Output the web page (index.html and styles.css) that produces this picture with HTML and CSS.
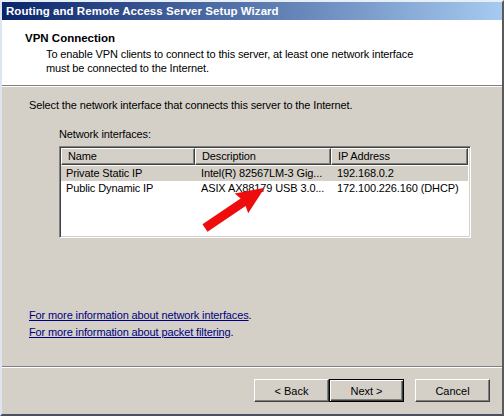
FILE: index.html
```html
<!DOCTYPE html>
<html>
<head>
<meta charset="utf-8">
<link rel="stylesheet" href="styles.css">
</head>
<body>
<div class="window">
  <div class="titlebar">Routing and Remote Access Server Setup Wizard</div>
  <div class="header">
    <div class="h-title">VPN Connection</div>
    <div class="h-sub">To enable VPN clients to connect to this server, at least one network interface<br>must be connected to the Internet.</div>
  </div>
  <div class="body">
    <div class="intro">Select the network interface that connects this server to the Internet.</div>
    <div class="group">
      <div class="label">Network interfaces:</div>
      <div class="listbox">
        <div class="lv-head">
          <div class="col c1">Name</div>
          <div class="col c2">Description</div>
          <div class="col c3">IP Address</div>
        </div>
        <div class="row sel">
          <div class="cell c1">Private Static IP</div>
          <div class="cell c2">Intel(R) 82567LM-3 Gig...</div>
          <div class="cell c3">192.168.0.2</div>
        </div>
        <div class="row">
          <div class="cell c1">Public Dynamic IP</div>
          <div class="cell c2">ASIX AX88179 USB 3.0...</div>
          <div class="cell c3">172.100.226.160 (DHCP)</div>
        </div>
        <svg class="arrow" viewBox="0 0 412 92" width="412" height="92">
          <g transform="translate(146 82) rotate(-34)">
            <polygon points="0,-4.5 46,-4.5 44,-12 72,0 44,12 46,4.5 0,4.5" fill="#ee0c0c"/>
          </g>
        </svg>
      </div>
    </div>
    <div class="links">
      <div><a href="#">For more information about network interfaces</a>.</div>
      <div><a href="#">For more information about packet filtering</a>.</div>
    </div>
  </div>
  <div class="footer">
    <button class="btn">&lt; Back</button>
    <button class="btn default">Next &gt;</button>
    <button class="btn cancel">Cancel</button>
  </div>
</div>
</body>
</html>
```
FILE: styles.css
```css
html, body {
  margin: 0;
  padding: 0;
  width: 504px;
  height: 416px;
  overflow: hidden;
  background: #d4d0c8;
}
.window {
  box-sizing: border-box;
  width: 504px;
  height: 416px;
  display: flex;
  flex-direction: column;
  background: #d4d0c8;
  border-left: 2px solid #dde6f0;
  border-top: 2px solid #e8eef6;
  border-right: 2px solid #5a5a5a;
  border-bottom: 2px solid #4a5060;
  font-family: "Liberation Sans", Arial, sans-serif;
  font-size: 11px;
  letter-spacing: -0.12px;
  color: #000;
}
.titlebar {
  height: 18px;
  line-height: 18px;
  padding-left: 4px;
  color: #fff;
  font-weight: bold;
  font-size: 11.5px;
  letter-spacing: 0.05px;
  background: linear-gradient(to right, #0a246a, #a6caf0);
}
.header {
  background: #fff;
  height: 66px;
  box-sizing: border-box;
  padding: 11px 0 0 23px;
  border-bottom: 1px solid #808080;
  box-shadow: 0 1px 0 #fff;
}
.h-title {
  font-weight: bold;
  font-size: 11.5px;
  line-height: 14px;
  letter-spacing: 0;
}
.h-sub {
  padding-left: 21px;
  margin-top: 2px;
  line-height: 14px;
}
.body {
  flex: 1;
  padding: 12px 0 0 27px;
  border-bottom: 1px solid #808080;
  box-shadow: 0 1px 0 #fff;
}
.intro {
  line-height: 14px;
}
.group {
  padding-left: 30px;
  margin-top: 15px;
}
.label {
  line-height: 14px;
}
.listbox {
  position: relative;
  margin-top: 5px;
  width: 412px;
  height: 92px;
  box-sizing: border-box;
  background: #fff;
  border: 1px solid;
  border-color: #808080 #fff #fff #808080;
  box-shadow: inset 1px 1px 0 #404040, inset -1px -1px 0 #d4d0c8;
  padding: 1px 2px 1px 1px;
}
.lv-head {
  display: flex;
  height: 17px;
}
.col {
  box-sizing: border-box;
  background: #d4d0c8;
  border: 1px solid;
  border-color: #fff #404040 #404040 #fff;
  box-shadow: inset -1px -1px 0 #808080;
  line-height: 14px;
  padding-left: 6px;
}
.c1 { width: 134px; }
.c2 { width: 136px; }
.c3 { width: 137px; }
.row {
  display: flex;
  height: 15px;
  line-height: 15px;
}
.row.sel {
  background: #d4d0c8;
  margin-top: 1px;
}
.cell {
  box-sizing: border-box;
  padding-left: 6px;
  white-space: nowrap;
  overflow: hidden;
}
.cell.c1 { padding-left: 5px; }
.arrow {
  position: absolute;
  left: -1px;
  top: -1px;
  pointer-events: none;
  overflow: visible;
}
.links {
  margin-top: 69px;
  line-height: 17px;
}
.links a {
  color: #00007f;
  text-decoration: underline;
}
.footer {
  height: 47px;
  box-sizing: border-box;
  display: flex;
  justify-content: flex-end;
  padding: 12px 12px 0 0;
}
.btn {
  width: 75px;
  height: 23px;
  box-sizing: border-box;
  background: #d4d0c8;
  font-family: "Liberation Sans", Arial, sans-serif;
  font-size: 11px;
  color: #000;
  padding: 0;
  border: 1px solid;
  border-color: #fff #404040 #404040 #fff;
  box-shadow: inset -1px -1px 0 #808080;
}
.btn.default {
  border: 1px solid #000;
  box-shadow: inset 1px 1px 0 #fff, inset -1px -1px 0 #404040, inset -2px -2px 0 #808080;
  margin-left: 0;
}
.btn.cancel {
  margin-left: 11px;
}
```
